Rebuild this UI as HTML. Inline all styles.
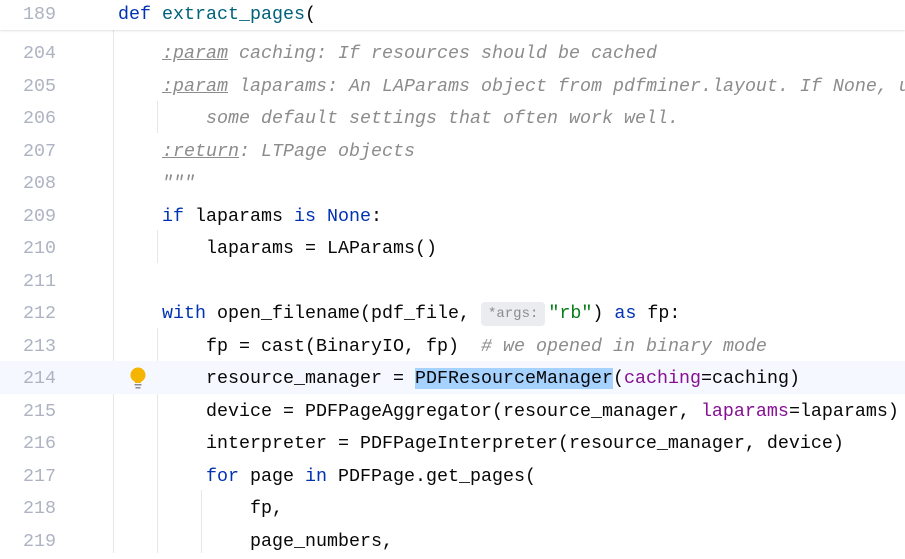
<!DOCTYPE html>
<html><head><meta charset="utf-8"><style>
body{margin:0;width:905px;height:553px;overflow:hidden;background:#fff;position:relative;font-family:"Liberation Mono",monospace;font-size:18.33px;}
.l{position:absolute;left:0;width:905px;height:32.53px;line-height:32.53px;white-space:pre;}
.n{position:absolute;left:0;top:2px;width:56px;text-align:right;color:#aeb3c2;}
.c{position:absolute;left:118px;top:2px;color:#080808;}
.k{color:#0033b3}.f{color:#00627a}.d{color:#8c8c8c;font-style:italic}.u{text-decoration:underline}
.s{color:#067d17}.p{color:#871094}
.g{position:absolute;width:1px;background:#e6e7eb}
.h{display:inline-block;background:#ebecf0;color:#8c8c8c;font-size:14px;line-height:24px;height:24px;border-radius:4px;padding:0 7px;margin-right:3px;vertical-align:1px;font-style:normal}
.sel{background:#a6d2ff}
</style></head><body>
<div class="g" style="left:113px;top:30px;height:523px"></div>
<div class="g" style="left:157px;top:101px;height:32px"></div>
<div class="g" style="left:157px;top:230px;height:33px"></div>
<div class="g" style="left:157px;top:328px;height:225px"></div>
<div class="g" style="left:201px;top:490px;height:63px"></div>
<div class="l" style="top:0;height:30px;line-height:29px;background:#fff;box-shadow:0 1px 2px rgba(0,0,0,0.12);z-index:2"><span class="n" style="top:0">189</span><span class="c" style="top:0"><span class="k">def</span> <span class="f">extract_pages</span>(</span></div>
<div class="l" style="top:36px"><span class="n">204</span><span class="c d">    <span class="u">:param</span> caching: If resources should be cached</span></div>
<div class="l" style="top:68.5px"><span class="n">205</span><span class="c d">    <span class="u">:param</span> laparams: An LAParams object from pdfminer.layout. If None, u</span></div>
<div class="l" style="top:101px"><span class="n">206</span><span class="c d">        some default settings that often work well.</span></div>
<div class="l" style="top:133.6px"><span class="n">207</span><span class="c d">    <span class="u">:return</span>: LTPage objects</span></div>
<div class="l" style="top:166.1px"><span class="n">208</span><span class="c d">    """</span></div>
<div class="l" style="top:198.7px"><span class="n">209</span><span class="c">    <span class="k">if</span> laparams <span class="k">is</span> <span class="k">None</span>:</span></div>
<div class="l" style="top:231.2px"><span class="n">210</span><span class="c">        laparams = LAParams()</span></div>
<div class="l" style="top:263.7px"><span class="n">211</span></div>
<div class="l" style="top:296.2px"><span class="n">212</span><span class="c">    <span class="k">with</span> open_filename(pdf_file, <span class="h">*args:</span><span class="s">"rb"</span>) <span class="k">as</span> fp:</span></div>
<div class="l" style="top:328.8px"><span class="n">213</span><span class="c">        fp = cast(BinaryIO, fp)  <span class="d"># we opened in binary mode</span></span></div>
<div class="l" style="top:361.3px;background:#f5f8fe"><span class="n">214</span><svg style="position:absolute;left:128px;top:5px" width="20" height="24" viewBox="0 0 20 24"><circle cx="10" cy="9" r="7.5" fill="#f4b400"/><rect x="7" y="14" width="6" height="3" fill="#f4b400"/><rect x="6.5" y="18" width="7" height="1.5" fill="#8c8c8c"/><rect x="7.5" y="21" width="5" height="1.5" fill="#8c8c8c"/></svg><span class="c">        resource_manager = <span class="sel">PDFResourceManager</span>(<span class="p">caching</span>=caching)</span></div>
<div class="l" style="top:393.8px"><span class="n">215</span><span class="c">        device = PDFPageAggregator(resource_manager, <span class="p">laparams</span>=laparams)</span></div>
<div class="l" style="top:426.4px"><span class="n">216</span><span class="c">        interpreter = PDFPageInterpreter(resource_manager, device)</span></div>
<div class="l" style="top:458.9px"><span class="n">217</span><span class="c">        <span class="k">for</span> page <span class="k">in</span> PDFPage.get_pages(</span></div>
<div class="l" style="top:491.4px"><span class="n">218</span><span class="c">            fp,</span></div>
<div class="l" style="top:524px"><span class="n">219</span><span class="c">            page_numbers,</span></div>
</body></html>
